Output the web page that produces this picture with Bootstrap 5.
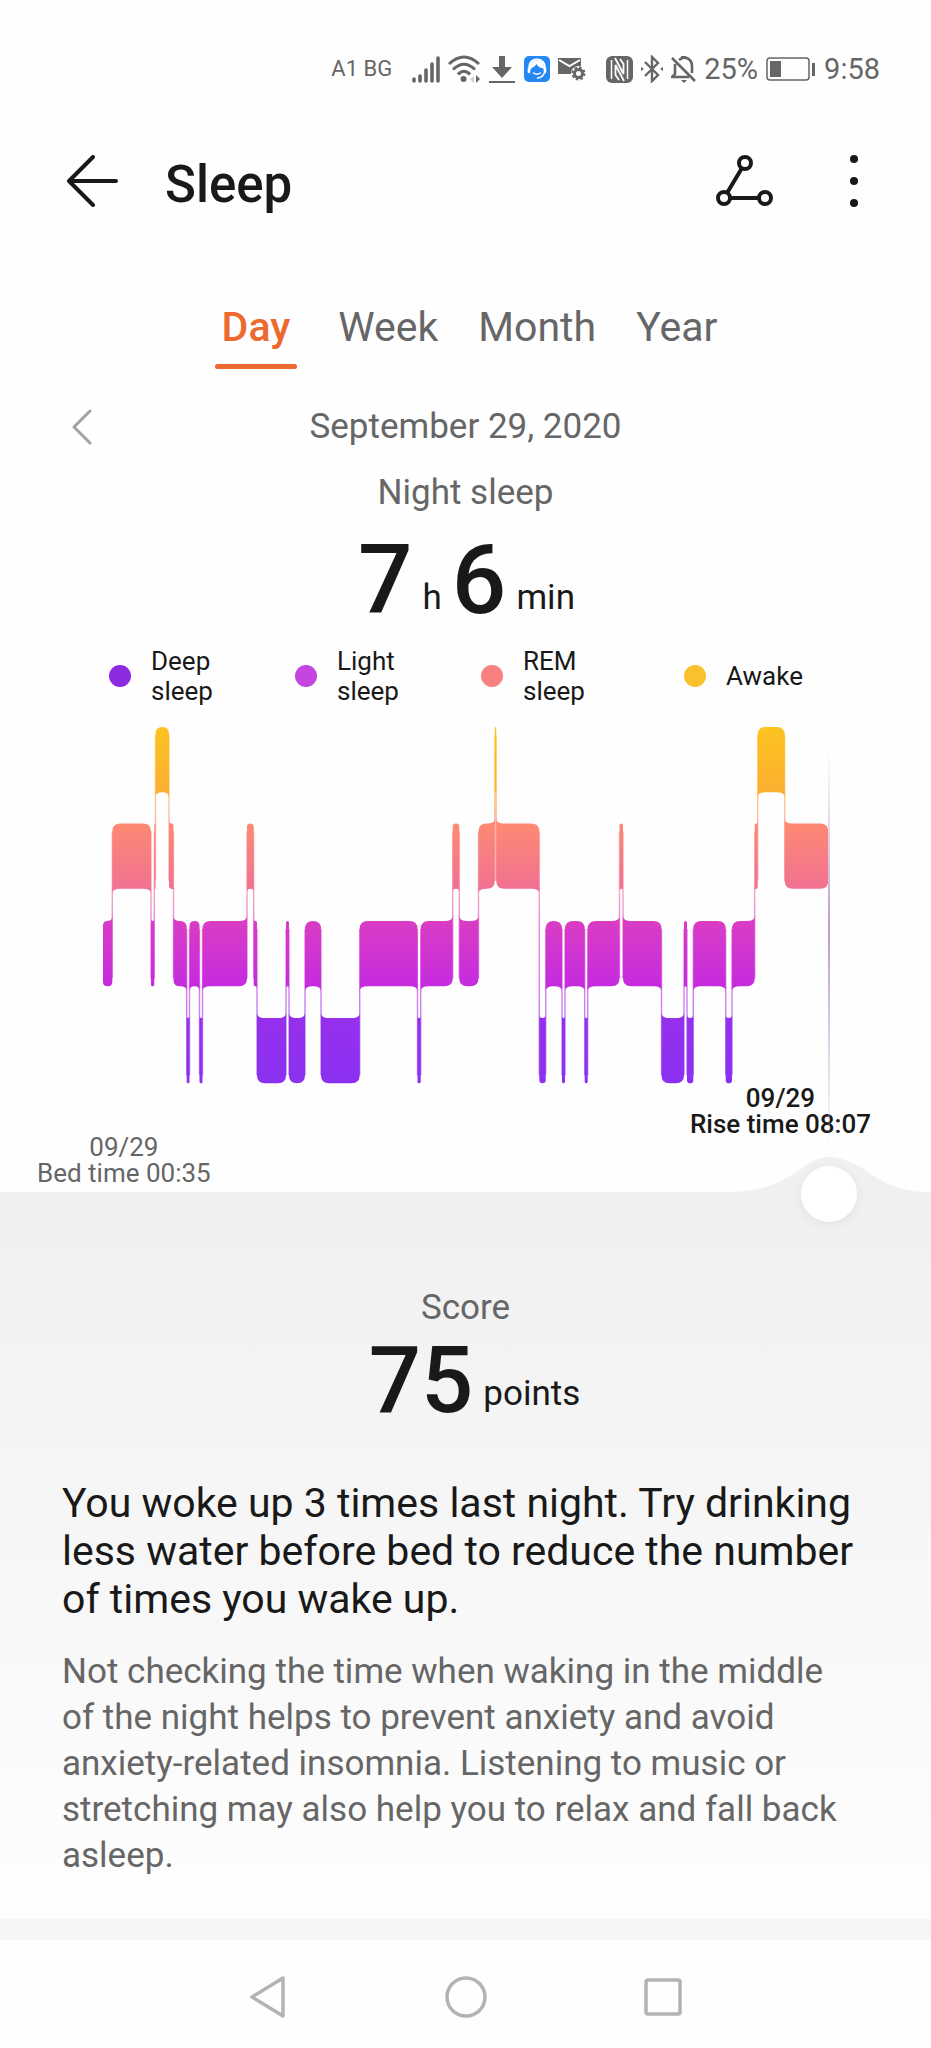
<!DOCTYPE html>
<html lang="en">
<head>
<meta charset="utf-8">
<meta name="viewport" content="width=device-width, initial-scale=1">
<title>Sleep</title>
<link href="https://cdn.jsdelivr.net/npm/bootstrap@5.3.0/dist/css/bootstrap.min.css" rel="stylesheet">
<style>
  :root { --ink: #191919; --muted: #666; --accent: #ec6a2f; --page: #fefefe; }
  body { font-family: Roboto, "Liberation Sans", sans-serif; background: var(--page); color: var(--ink); font-size: 35px; line-height: 44px; }
  svg { display: block; flex: none; }
  .soft { color: var(--muted); }
  .plain-btn { background: none; border: 0; padding: 0; color: inherit; display: block; }

  .status { padding: 52px 51px 0; height: 86px; font-size: 29px; line-height: 34px; color: var(--muted); gap: 8px; }
  .carrier { font-size: 22px; margin-right: 12px; }

  .topbar { padding: 69px 71px 0 66px; }
  .topbar h1 { font-size: 51px; line-height: 60px; font-weight: 500; margin-left: 47px; }
  .topbar .tools { gap: 74px; }

  .range-tabs { margin-top: 88px; padding-left: 8px; gap: 26px; font-size: 41px; line-height: 48px; }
  .range-tabs a { color: var(--muted); text-decoration: none; padding: 0 7px 13px; position: relative; }
  .range-tabs a.active { color: var(--accent); font-weight: 500; margin-right: 8px; }
  .range-tabs a.active::after { content: ""; display: block; position: absolute; left: 0; right: 0; bottom: -5px; height: 5px; border-radius: 3px; background: var(--accent); }

  .date-row { display: grid; grid-template-columns: 1fr auto 1fr; margin-top: 41px; padding: 0 72px; align-items: center; }
  .night-label { margin-top: 22px; }
  .figure-row { gap: 10px; }
  .big { font-weight: 500; font-size: 96px; line-height: 100px; }
  .unit { padding-bottom: 10px; }
  .duration { margin-top: 15px; padding-left: 2px; }

  .legend-row { display: grid; grid-template-columns: 186fr 186fr 203fr 205fr; margin: 16px 42px 0 109px; font-size: 26px; line-height: 30px; min-height: 60px; }
  .legend-row li { display: flex; align-items: center; gap: 20px; }
  .legend-row li span:last-child { max-width: 80px; }
  .swatch { width: 22px; height: 22px; border-radius: 50%; flex: none; }

  .chart-box { margin: 14px 102px 0 103px; position: relative; }
  .chart-box svg { width: 100%; height: 365px; overflow: visible; }
  .cursor-line { position: absolute; right: -1px; top: 30px; width: 2px; height: 400px; background: linear-gradient(#fff0, #dccbe4 25%, #b79fc4 45%, #dccbe4 70%, #fff0); }
  .time-row { height: 101px; margin-bottom: 6px; padding: 0 60px 0 37px; font-size: 26px; line-height: 26px; }
  .rise { font-weight: 500; }

  .advice { background: linear-gradient(#f0f0f0, #fefefe); padding: 94px 62px 40px; position: relative; border-bottom: 21px solid #f6f6f6; }
  .hump { position: absolute; right: 0; top: -36px; }
  .scrub { position: absolute; left: 75px; right: 74px; top: -26px; width: calc(100% - 149px); height: 56px; margin: 0; appearance: none; background: transparent; }
  .scrub::-webkit-slider-thumb { appearance: none; width: 56px; height: 56px; border-radius: 50%; background: #fff; border: 0; box-shadow: 0 3px 12px #0000000f; }
  .score { margin-top: 4px; padding-left: 18px; }
  .score .big { font-size: 92px; line-height: 94px; }
  .score .unit { padding-bottom: 12px; }
  .headline { font-size: 41px; line-height: 48px; margin: 51px 0 0; }
  .detail { line-height: 46px; margin: 26px 0 0; padding-right: 16px; }

  .sysnav { padding: 34px 249px 27px 248px; }
</style>
</head>
<body>
<div class="status d-flex justify-content-end align-items-center">
  <span class="carrier">A1 BG</span>
  <svg width="28" height="28" viewBox="0 0 28 28" stroke="#666" stroke-width="3.6" stroke-linecap="round"><path d="M2 26v-2M8 26v-5M14 26V15M20 26V9M26 26V3"/></svg>
  <svg width="32" height="28" viewBox="0 0 32 28" fill="none" stroke="#666" stroke-width="3"><path d="M1 9Q16-5 31 9M5 14.500Q16 4 27 14.500M10 19.500Q16 13 22 19.500"/><circle cx="15.500" cy="24" r="3" fill="#666" stroke="none"/><path d="M26 21v7l-4-3.500z" fill="#ccc" stroke="none"/><path d="M28 20v8l4-4z" fill="#666" stroke="none"/></svg>
  <svg width="28" height="28" viewBox="0 0 28 28" fill="#666"><path d="M11 1h6v11h7L14 23 4 12h7zM1 26h26v2H1z"/></svg>
  <svg width="26" height="26" viewBox="0 0 26 26"><rect width="26" height="26" rx="5" fill="#2487f2"/><path d="M5.500 14C4 7 8 3.500 13 3.500S22 7 20.500 14" fill="none" stroke="#fff" stroke-width="1.800"/><path d="M6 14C5 8 8 4.500 13 4.500S20.500 8 20 12.500C16 12 14 10.500 12.500 8 11 11 8 11 6 14z" fill="#fff"/><path d="M5 12.500v3.500M21 12.500v3.500" stroke="#fff" stroke-width="2.600" stroke-linecap="round"/><path d="M9.500 17q3.500 2.500 7 0M20.500 16.500q-1.500 5-7 5.500" fill="none" stroke="#fff" stroke-width="1.500" stroke-linecap="round"/></svg>
  <svg class="me-2" width="28" height="24" viewBox="0 0 28 24"><path d="M0 1h23v16H0z" fill="#666"/><path d="M1 3l10.500 6L22 3" fill="none" stroke="#fff" stroke-width="2"/><circle cx="20.500" cy="16.500" r="7.500" fill="#fefefe"/><circle cx="20.500" cy="16.500" r="4" fill="none" stroke="#666" stroke-width="3"/><circle cx="20.500" cy="16.500" r="6" fill="none" stroke="#666" stroke-width="2" stroke-dasharray="2.500 2.200"/></svg>
  <svg class="ms-1" width="27" height="27" viewBox="0 0 27 27"><rect width="27" height="27" rx="6" fill="#666"/><path d="M5.500 4v19M21.500 4v19" stroke="#fefefe" stroke-width="1.500"/><path d="M9 2l8.500 16V8L14 3M18 25L9.500 9v10l3.500 5" fill="none" stroke="#fefefe" stroke-width="1.800"/></svg>
  <svg width="22" height="28" viewBox="0 0 22 28" fill="none" stroke="#666" stroke-width="2.400"><path d="M4 7l13 13-6 6V2l6 6L4 21"/><path d="M0 12l3 2-3 2zM22 12l-3 2 3 2z" fill="#666" stroke="none"/></svg>
  <svg width="25" height="28" viewBox="0 0 25 28" fill="none" stroke="#666" stroke-width="2.600"><path d="M1 3l23 23M4 9v10l-3 3h17M8 5c6-5 13-1 13 6v7"/><path d="M10 25h6l-3 3zM10 1h5v3h-5z" fill="#666" stroke="none"/></svg>
  <span>25%</span>
  <svg width="50" height="24" viewBox="0 0 50 24"><rect x="1" y="1" width="42" height="22" rx="3" fill="none" stroke="#666" stroke-width="1.500"/><path d="M4 4h11v16H4zM46 6h3v13h-3z" fill="#666"/></svg>
  <span>9:58</span>
</div>

<header class="topbar d-flex align-items-start">
  <button class="plain-btn" type="button" aria-label="Back"><svg width="52" height="52" viewBox="0 0 52 52" fill="none" stroke="#191919" stroke-width="4" stroke-linecap="round" stroke-linejoin="round"><path d="M27 2L3 26l24 24M3 26h47"/></svg></button>
  <h1 class="mb-0">Sleep</h1>
  <div class="tools d-flex ms-auto align-items-center">
    <button class="plain-btn" type="button" aria-label="Share"><svg width="58" height="52" viewBox="0 0 58 52" fill="none" stroke="#191919" stroke-width="4"><circle cx="29" cy="8" r="6"/><circle cx="8" cy="43" r="6"/><circle cx="49" cy="43" r="6"/><path d="M26 13L11 38M14 43h29"/></svg></button>
    <button class="plain-btn" type="button" aria-label="More options"><svg width="12" height="52" viewBox="0 0 12 52" fill="#191919"><circle cx="6" cy="4" r="4"/><circle cx="6" cy="26" r="4"/><circle cx="6" cy="48" r="4"/></svg></button>
  </div>
</header>

<nav class="range-tabs d-flex justify-content-center" aria-label="Period">
  <a class="active" href="#day" aria-current="page">Day</a>
  <a href="#week">Week</a>
  <a href="#month">Month</a>
  <a href="#year">Year</a>
</nav>

<main>
  <div class="date-row soft">
    <button class="plain-btn" type="button" aria-label="Previous day"><svg width="20" height="36" viewBox="0 0 20 36" fill="none" stroke="#a3a3a3" stroke-width="3" stroke-linecap="round" stroke-linejoin="round"><path d="M18 2L2 18l16 16"/></svg></button>
    <span>September 29, 2020</span>
  </div>
  <div class="night-label soft text-center">Night sleep</div>
  <div class="duration figure-row d-flex justify-content-center align-items-end">
    <span class="big">7</span><span class="unit">h</span><span class="big">6</span><span class="unit">min</span>
  </div>

  <ul class="legend-row list-unstyled mb-0">
    <li><span class="swatch" style="background:#8a2be2"></span><span>Deep sleep</span></li>
    <li><span class="swatch" style="background:#c545e0"></span><span>Light sleep</span></li>
    <li><span class="swatch" style="background:#f98080"></span><span>REM sleep</span></li>
    <li><span class="swatch" style="background:#fbc02d"></span><span>Awake</span></li>
  </ul>

  <div class="chart-box">
    <svg id="stages" viewBox="0 0 726 365" preserveAspectRatio="none" role="img" aria-label="Sleep stages from 00:35 to 08:07">
      <defs>
        <linearGradient id="stageFill" gradientUnits="userSpaceOnUse" x1="0" y1="7" x2="0" y2="363">
          <stop offset="0" stop-color="#fcc320"/><stop offset=".18" stop-color="#fbb031"/>
          <stop offset=".27" stop-color="#fd8a72"/><stop offset=".46" stop-color="#f07093"/>
          <stop offset=".545" stop-color="#d93dc4"/><stop offset=".73" stop-color="#c52bdf"/>
          <stop offset=".82" stop-color="#9530ed"/><stop offset="1" stop-color="#8b30f1"/>
        </linearGradient>
      </defs>
      <path id="links" fill="none" stroke="url(#stageFill)" stroke-width="1.400" opacity=".6"/>
      <path id="blocks" fill="url(#stageFill)"/>
    </svg>
    <div class="cursor-line"></div>
  </div>
  <div class="time-row d-flex justify-content-between text-center">
    <div class="soft align-self-end">09/29<br>Bed time 00:35</div>
    <div class="rise">09/29<br>Rise time 08:07</div>
  </div>

  <section class="advice">
    <svg class="hump" width="204" height="37" viewBox="0 0 204 37"><path d="M0 36C30 36 48 30 70 16 82 7 90 1 102 1c12 0 22 5 33 11 15 10 30 23 63 24h6v1H0z" fill="#f0f0f0"/></svg>
    <input class="scrub" type="range" min="0" max="100" value="100" aria-label="Time of night">
    <div class="soft text-center">Score</div>
    <div class="score figure-row d-flex justify-content-center align-items-end">
      <span class="big">75</span><span class="unit">points</span>
    </div>
    <p class="headline">You woke up 3 times last night. Try drinking less water before bed to reduce the number of times you wake up.</p>
    <p class="detail soft">Not checking the time when waking in the middle of the night helps to prevent anxiety and avoid anxiety-related insomnia. Listening to music or stretching may also help you to relax and fall back asleep.</p>
  </section>
</main>

<footer class="sysnav d-flex justify-content-between align-items-center">
  <button class="plain-btn" type="button" aria-label="Back"><svg width="40" height="46" viewBox="0 0 40 46" fill="none" stroke="#b3b3b3" stroke-width="3.500" stroke-linejoin="round"><path d="M35 4v38L4 23z"/></svg></button>
  <button class="plain-btn" type="button" aria-label="Home"><svg width="42" height="42" viewBox="0 0 42 42" fill="none" stroke="#b3b3b3" stroke-width="3.500"><circle cx="21" cy="21" r="19"/></svg></button>
  <button class="plain-btn" type="button" aria-label="Recent apps"><svg width="38" height="38" viewBox="0 0 38 38" fill="none" stroke="#b3b3b3" stroke-width="3.500"><rect x="2" y="2" width="34" height="34" rx="2"/></svg></button>
</footer>

<script src="https://cdn.jsdelivr.net/npm/bootstrap@5.3.0/dist/js/bootstrap.bundle.min.js"></script>
<script>
  // Top edge of each stage: A awake, R REM, L light, D deep
  const top0 = { A: 7, R: 103.5, L: 201, D: 298 };
  const H = 65.3;
  // Each entry: stage, x where it ends
  const stages = [
    ['L', 9.3], ['R', 48], ['L', 51.3], ['R', 52.5], ['A', 66], ['R', 70.5], ['L', 83.7], ['D', 86.5],
    ['L', 96.5], ['D', 99.5], ['L', 144], ['R', 150.7], ['L', 154], ['D', 183], ['L', 186], ['D', 202],
    ['L', 218], ['D', 256.7], ['L', 314.5], ['D', 317.7], ['L', 349.7], ['R', 356.3], ['L', 375.5],
    ['R', 391.8], ['A', 393.2], ['R', 436.3], ['D', 442.7], ['L', 459], ['D', 462], ['L', 481.7],
    ['D', 484.7], ['L', 516.5], ['R', 520], ['L', 558.5], ['D', 581], ['L', 584], ['D', 590.3],
    ['L', 622.7], ['D', 629], ['L', 651.7], ['R', 654.7], ['A', 681.7], ['R', 725.3]
  ];
  let blocks = '', links = '', x0 = 0;
  stages.forEach(([s, x1], i) => {
    const t = top0[s], b = t + H, r = Math.min(8, (x1 - x0) / 2), f = Math.min(5, r);
    const prev = stages[i - 1], next = stages[i + 1];
    // A corner flares towards its neighbour's level and is rounded elsewhere
    const up = n => n && top0[n[0]] < t, down = n => n && top0[n[0]] > t;
    const tl = up(prev) ? t - f : t + r, bl = down(prev) ? b + f : b - r;
    const tr = up(next) ? t - f : t + r, br = down(next) ? b + f : b - r;
    blocks += `M${x0} ${tl}Q${x0} ${t} ${x0 + r} ${t}H${x1 - r}Q${x1} ${t} ${x1} ${tr}V${br}Q${x1} ${b} ${x1 - r} ${b}H${x0 + r}Q${x0} ${b} ${x0} ${bl}Z`;
    if (next) {
      const n = top0[next[0]];
      links += `M${x1} ${Math.min(t, n) + 8}V${Math.max(t, n) + H - 8}`;
    }
    x0 = x1;
  });
  document.getElementById('blocks').setAttribute('d', blocks);
  document.getElementById('links').setAttribute('d', links);
</script>
</body>
</html>
